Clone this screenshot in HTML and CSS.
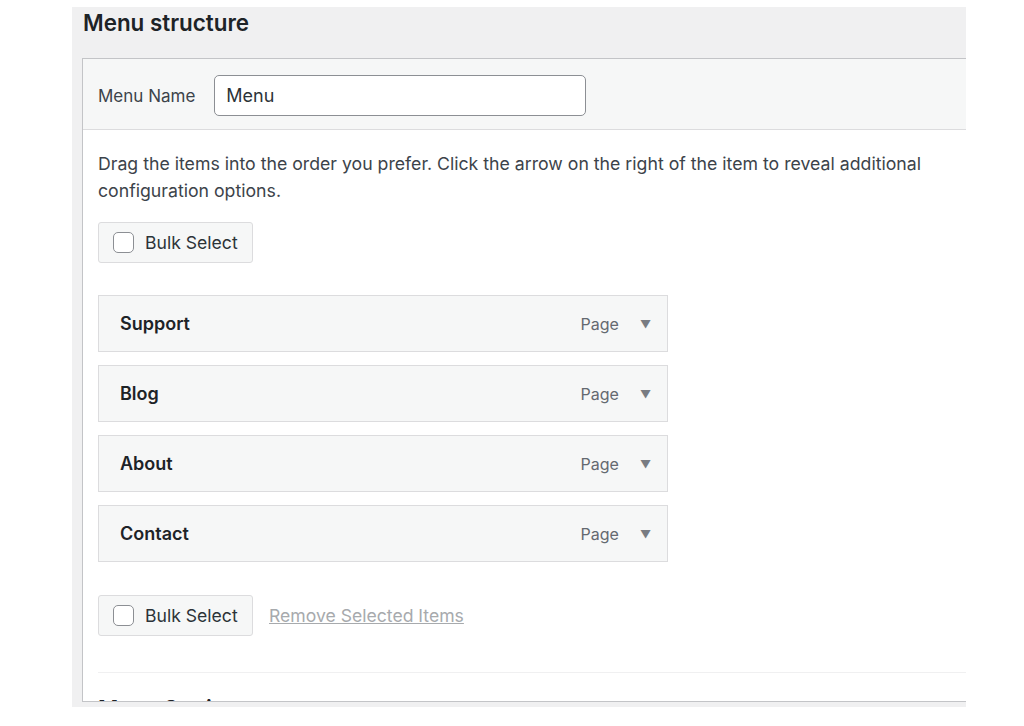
FILE: index.html
```html
<!DOCTYPE html>
<html lang="en">
<head>
  <meta charset="UTF-8" />
  <title>Menu structure</title>
  <link rel="stylesheet" href="styles.css">
</head>
<body>
  <div class="panel">
    <h2 class="panel-title">Menu structure</h2>
    <div class="menu-box">
      <div class="menu-header">
        <label class="menu-name-label" for="menuName">Menu Name</label>
        <input class="menu-name-input" id="menuName" type="text" value="Menu" />
      </div>
      <div class="menu-body">
        <p class="instructions">Drag the items into the order you prefer. Click the arrow on the right of the item to reveal additional configuration options.</p>

        <label class="bulk-btn">
          <span class="check"></span>
          <span>Bulk Select</span>
        </label>

        <ul class="items">
          <li class="item"><span class="item-title">Support</span><span class="item-type">Page</span><span class="arrow">&#9660;</span></li>
          <li class="item"><span class="item-title">Blog</span><span class="item-type">Page</span><span class="arrow">&#9660;</span></li>
          <li class="item"><span class="item-title">About</span><span class="item-type">Page</span><span class="arrow">&#9660;</span></li>
          <li class="item"><span class="item-title">Contact</span><span class="item-type">Page</span><span class="arrow">&#9660;</span></li>
        </ul>

        <div class="bulk-row">
          <label class="bulk-btn">
            <span class="check"></span>
            <span>Bulk Select</span>
          </label>
          <a class="remove-link" href="#">Remove Selected Items</a>
        </div>

        <hr class="sep" />
        <h3 class="settings-title">Menu Settings</h3>
      </div>
    </div>
  </div>
</body>
</html>
```

FILE: styles.css
```css
body {
  margin: 0;
  background: #fff;
  font-family: Inter, "Noto Sans", sans-serif;
  color: #3c434a;
}
.panel {
  margin: 7px 0 0 72px;
  width: 894px;
  height: 700px;
  background: #f0f0f1;
  overflow: hidden;
  padding-left: 10px;
  box-sizing: border-box;
}
.panel-title {
  margin: 0;
  height: 51px;
  padding: 1px 0 0 1px;
  box-sizing: border-box;
  font-size: 22.4px;
  line-height: 30px;
  font-weight: 600;
  color: #1d2327;
}
.menu-box {
  width: 1000px;
  height: 644px;
  background: #fff;
  border: 1px solid #c3c4c7;
  box-sizing: border-box;
  overflow: hidden;
}
.menu-header {
  height: 71px;
  background: #f6f7f7;
  border-bottom: 1px solid #dcdcde;
  box-sizing: border-box;
  display: flex;
  align-items: center;
  padding: 0 0 0 15px;
}
.menu-name-label {
  font-size: 17px;
  color: #3c434a;
  margin: 4px 19px 0 0;
}
.menu-name-input {
  width: 372px;
  height: 41px;
  box-sizing: border-box;
  border: 1px solid #8c8f94;
  border-radius: 5px;
  padding: 0 11px;
  font-family: inherit;
  font-size: 18px;
  color: #2c3338;
  background: #fff;
  margin-top: 3px;
}
.menu-body {
  padding: 20px 0 0 15px;
}
.instructions {
  margin: 0;
  width: 850px;
  font-size: 17.7px;
  line-height: 27px;
  color: #3c434a;
}
.bulk-btn {
  display: inline-flex;
  align-items: center;
  gap: 11px;
  width: 155px;
  height: 41px;
  box-sizing: border-box;
  padding-left: 14px;
  background: #f6f7f7;
  border: 1px solid #dcdcde;
  border-radius: 3px;
  font-size: 17.6px;
  color: #2c3338;
}
.menu-body > .bulk-btn {
  margin-top: 18px;
}
.check {
  width: 21px;
  height: 21px;
  box-sizing: border-box;
  border: 1px solid #8c8f94;
  border-radius: 5px;
  background: #fff;
}
.items {
  list-style: none;
  margin: 32px 0 0;
  padding: 0;
  display: flex;
  flex-direction: column;
  gap: 13px;
}
.item {
  width: 570px;
  height: 57px;
  box-sizing: border-box;
  background: #f6f7f7;
  border: 1px solid #dcdcde;
  display: flex;
  align-items: center;
  padding: 0 16px 0 21px;
}
.item-title {
  flex: 1;
  font-size: 18px;
  font-weight: 600;
  color: #1d2327;
}
.item-type {
  font-size: 16px;
  color: #646970;
  margin-right: 21px;
}
.arrow {
  font-size: 11px;
  color: #787c82;
}
.bulk-row {
  display: flex;
  align-items: center;
  gap: 16px;
  margin-top: 33px;
}
.remove-link {
  font-size: 17.6px;
  color: #a7aaad;
  text-decoration: underline;
}
.sep {
  margin: 36px 0 0;
  border: 0;
  border-top: 1px solid #f0f0f1;
}
.settings-title {
  margin: 22px 0 0;
  font-size: 22px;
  font-weight: 600;
  color: #1d2327;
}
```
